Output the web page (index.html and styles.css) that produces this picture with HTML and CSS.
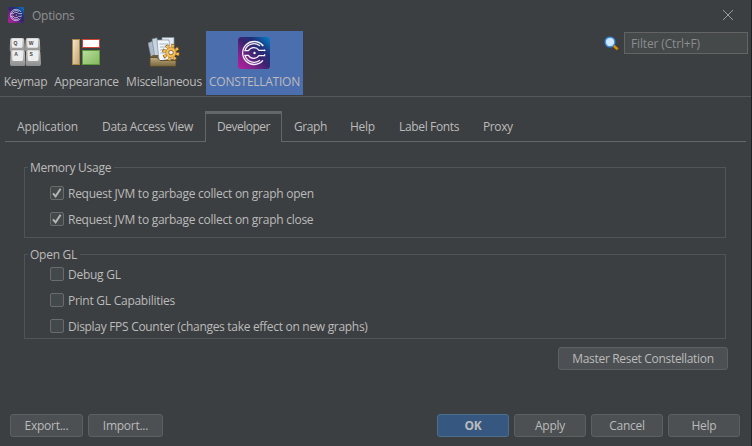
FILE: index.html
```html
<!DOCTYPE html>
<html lang="en">
<head>
<meta charset="utf-8">
<title>Options</title>
<link rel="stylesheet" href="styles.css">
</head>
<body>
<svg width="0" height="0" class="defs">
  <defs>
    <linearGradient id="brand" x1="0" y1="1" x2="1" y2="0">
      <stop offset="0" stop-color="#b51f9b"/><stop offset=".22" stop-color="#8b2390"/><stop offset=".5" stop-color="#3a2470"/><stop offset=".7" stop-color="#20307a"/><stop offset="1" stop-color="#0085d0"/>
    </linearGradient>
    <linearGradient id="tan" x1="0" y1="0" x2="1" y2="1"><stop offset="0" stop-color="#f3e8d6"/><stop offset="1" stop-color="#c4a36d"/></linearGradient>
    <linearGradient id="green" x1="0" y1="0" x2="1" y2="1"><stop offset="0" stop-color="#b9dda0"/><stop offset="1" stop-color="#84b85c"/></linearGradient>
    <linearGradient id="keyside" x1="0" y1="0" x2="0" y2="1"><stop offset="0" stop-color="#cfcfcf"/><stop offset="1" stop-color="#8d8d8d"/></linearGradient>
    <linearGradient id="tray" x1="0" y1="0" x2="0" y2="1"><stop offset="0" stop-color="#c0ae80"/><stop offset="1" stop-color="#75643c"/></linearGradient>
    <symbol id="logo" viewBox="0 0 32 32">
      <rect width="32" height="32" rx="3.5" fill="url(#brand)"/>
      <g fill="none" stroke="#f4f0fa" stroke-width="1.3" stroke-linecap="round">
        <path d="M24.6 8.2A11.5 11.5 0 1 0 24.6 23.8"/>
        <path d="M7.2 13A9.2 9.2 0 0 1 21.5 8.6M7.2 19A9.2 9.2 0 0 0 21.5 23.4"/>
        <path d="M6.8 13.7H10.4A6.4 6.4 0 0 1 21 13.3H26.6M6.8 18.3H10.4A6.4 6.4 0 0 0 21 18.7H26.6V17.6"/>
      </g>
      <circle cx="16.5" cy="16" r="1.2" fill="#fff"/><circle cx="26.6" cy="13.3" r=".9" fill="#fff"/><circle cx="24.6" cy="8.4" r=".9" fill="#fff"/>
    </symbol>
    <symbol id="key" viewBox="0 0 16 14" preserveAspectRatio="none">
      <path d="M2.5 0H13.5Q15 0 15.2 2L16 11.5Q16 14 14 14H2Q0 14 0 11.5L.8 2Q1 0 2.5 0Z" fill="url(#keyside)"/>
      <rect x="2.4" y=".7" width="11" height="9" rx="1.3" fill="#ededed"/>
    </symbol>
  </defs>
</svg>
<div class="window">
  <header class="titlebar">
    <svg class="app-icon" width="16" height="16"><use href="#logo"/></svg>
    <span class="t-options">Options</span>
    <svg class="close" width="12" height="12" viewBox="0 0 12 12"><path d="M1 1L11 11M11 1L1 11"/></svg>
  </header>
  <div class="toolbar">
    <div class="cat keymap">
      <svg width="32" height="32" viewBox="0 0 32 32">
        <use href="#key" x=".5" y="1" width="15.5" height="14"/><use href="#key" x="16" y="1" width="15.5" height="14"/>
        <use href="#key" x="1" y="13" width="15.5" height="16"/><use href="#key" x="16.5" y="13" width="15.5" height="16"/>
        <g class="keycaps"><text x="4.5" y="7.5">Q</text><text x="19.8" y="7.5">W</text><text x="5.2" y="19.3">A</text><text x="20.6" y="19.3">S</text></g>
      </svg>
      <span>Keymap</span>
    </div>
    <div class="cat appearance">
      <svg width="32" height="32" viewBox="0 0 32 32">
        <rect x="2.5" y="2.5" width="7" height="25" fill="url(#tan)" stroke="#ad8847"/>
        <rect x="12.5" y="2.5" width="17" height="8" fill="#fff" stroke="#cf4637"/>
        <rect x="12.5" y="13.5" width="17" height="14" fill="url(#green)" stroke="#5d9a3a"/>
      </svg>
      <span>Appearance</span>
    </div>
    <div class="cat misc">
      <svg width="32" height="32" viewBox="0 0 32 32">
        <path d="M0 6L5 4L8 19L3 20Z" fill="#aebbc9" stroke="#71808f" stroke-width=".6"/>
        <path d="M4 2L9 .8L12 20L7 22Z" fill="#c7d3df" stroke="#71808f" stroke-width=".6"/>
        <path d="M2 20L5 18H27V29H2Z" fill="#6b5c3b"/>
        <path d="M14 .5H26V22H14Z" fill="#e1e9f1" stroke="#8092a3" stroke-width=".7"/>
        <path d="M9 3H21L23 22L11 24Z" fill="#f2f6fa" stroke="#8293a4" stroke-width=".7"/>
        <path d="M11.5 7H20M11.8 10H20M12 13H20M12.3 16H18" stroke="#a6b6c6"/>
        <path d="M2 20.5H9L12 23.5H28V29.5H2Z" fill="url(#tray)" stroke="#514427" stroke-width=".8"/>
        <g transform="translate(23 15.5)">
          <circle r="6.8" fill="none" stroke="#8b5708" stroke-width="4" stroke-dasharray="3 2.34"/>
          <circle r="6.7" fill="none" stroke="#f1bd59" stroke-width="2.6" stroke-dasharray="2.4 2.86" stroke-dashoffset="-.3"/>
          <circle r="5" fill="#f5c25d" stroke="#d69327" stroke-width=".8"/>
          <circle r="2.3" fill="#e7edf2" stroke="#99712e"/>
        </g>
      </svg>
      <span>Miscellaneous</span>
    </div>
    <div class="cat constellation selected">
      <svg width="32" height="32"><use href="#logo"/></svg>
      <span>CONSTELLATION</span>
    </div>
    <div class="search">
      <svg width="16" height="16" viewBox="0 0 16 16">
        <path d="M9.7 9.7L13.7 13.4" stroke="#d98a05" stroke-width="2.6"/>
        <circle cx="6" cy="6" r="4.8" fill="#cfe6ff" stroke="#3b8de0" stroke-width="1.4"/>
      </svg>
      <div class="filter">Filter (Ctrl+F)</div>
    </div>
  </div>
  <nav class="tabs">
    <div class="tab w1">Application</div><div class="tab w2">Data Access View</div><div class="tab w3 active">Developer</div><div class="tab w4">Graph</div><div class="tab w5">Help</div><div class="tab w6">Label Fonts</div><div class="tab w7">Proxy</div><div class="rest"></div>
  </nav>
  <main>
    <section class="group memory">
      <h2>Memory Usage</h2>
      <div class="check"><i><svg width="14" height="14" viewBox="0 0 14 14"><path d="M3 7.3L5.6 10.3L10.6 2.8"/></svg></i><span>Request JVM to garbage collect on graph open</span></div>
      <div class="check"><i><svg width="14" height="14" viewBox="0 0 14 14"><path d="M3 7.3L5.6 10.3L10.6 2.8"/></svg></i><span>Request JVM to garbage collect on graph close</span></div>
    </section>
    <section class="group opengl">
      <h2>Open GL</h2>
      <div class="check"><i></i><span>Debug GL</span></div>
      <div class="check"><i></i><span>Print GL Capabilities</span></div>
      <div class="check tight"><i></i><span>Display FPS Counter (changes take effect on new graphs)</span></div>
    </section>
    <div class="reset-row"><div class="btn reset">Master Reset Constellation</div></div>
  </main>
  <footer>
    <div class="btn export">Export...</div><div class="btn import">Import...</div>
    <div class="spacer"></div>
    <div class="btn ok">OK</div><div class="btn">Apply</div><div class="btn">Cancel</div><div class="btn">Help</div>
  </footer>
</div>
</body>
</html>
```
FILE: styles.css
```css
* { box-sizing: border-box; }
body { margin: 0; background: #3c3f41; overflow: hidden; }
.defs { display: block; height: 0; }
.window {
  width: 752px; height: 446px; display: flex; flex-direction: column;
  border-right: 1px solid #202122; background: #3c3f41; color: #bbb;
  font: 12px/16px "Open Sans", "Noto Sans", sans-serif; letter-spacing: -.26px;
  white-space: nowrap;
}
svg { display: block; flex: none; }
.titlebar { height: 31px; display: flex; align-items: center; padding: 0 17px 1px 8px; gap: 8px; color: #8f9192; }
.titlebar span { padding-top: 2px; }
.close { margin-left: auto; fill: none; stroke: #9b9d9e; stroke-width: 1; }
.toolbar { height: 66px; display: flex; border-bottom: 1px solid #555759; }
.cat { height: 64px; padding-top: 6px; display: flex; flex-direction: column; align-items: center; gap: 5px; }
.cat svg { margin-left: -1px; }
.keymap { width: 51px; }
.appearance { width: 71px; }
.misc { width: 84px; }
.constellation { width: 97px; }
.selected { background: #4b6eaf; }
.keycaps { font: bold 5px "Liberation Sans", sans-serif; fill: #444; }
.search { margin-left: auto; display: flex; padding: 1px 3px 0 0; gap: 4px; }
.search svg { margin-top: 4px; }
.filter { width: 124px; height: 22px; background: #45494a; border: 1px solid #646464; padding: 3px 6px; line-height: 16px; color: #8b8d8e; letter-spacing: -.15px; }
.tabs { height: 31px; margin: 14px 5px 0; display: flex; }
.tab, .rest { border-bottom: 1px solid #646668; }
.tab { height: 31px; padding: 8px 0 0 12px; }
.rest { flex: 1; }
.w1 { width: 85px; letter-spacing: -.15px; } .w2 { width: 115px; letter-spacing: -.32px; } .w3 { width: 77px; } .w4 { width: 56px; letter-spacing: -.4px; } .w5 { width: 49px; } .w6 { width: 84px; letter-spacing: -.34px; } .w7 { width: 54px; letter-spacing: -.4px; }
.active { border: 1px solid #646668; border-top-width: 3px; border-bottom: 0; padding: 5px 0 0 11px; letter-spacing: -.5px; }
main { padding: 25px 24px 0; height: 272px; }
.group { width: 702px; border: 1px solid #515456; padding: 0 0 0 25px; }
.memory { height: 71px; }
.opengl { height: 85px; margin-top: 16px; }
h2 { margin: -8px 0 0 -22px; width: max-content; padding: 0 3px 0 2px; height: 16px; font: inherit; background: #3c3f41; }
.check { display: flex; gap: 4px; align-items: center; height: 14px; margin-top: 12px; }
.tight { letter-spacing: -.3px; }
.memory h2 + .check { margin-top: 10px; }
.opengl h2 + .check { margin-top: 4px; }
.check i { width: 14px; height: 14px; border: 1px solid #6b6b6b; border-radius: 2px; background: #43494a; }
.check span { padding-top: 2px; }
.check svg { margin: -1px; fill: none; stroke: #b5b5b5; stroke-width: 2; }
.reset-row { display: flex; justify-content: flex-end; margin-top: 8px; margin-right: -1px; }
.btn { width: 72px; height: 23px; border: 1px solid #5e6060; border-radius: 3px; background: #4c5052; text-align: center; line-height: 22px; }
.reset { width: 170px; letter-spacing: -.32px; }
footer { display: flex; gap: 5px; padding: 0 11px 0 10px; }
.export { width: 73px; }
.import { width: 75px; }
.spacer { flex: 1; }
.ok { background: #365880; border-color: #4c708c; font-weight: bold; }
```
